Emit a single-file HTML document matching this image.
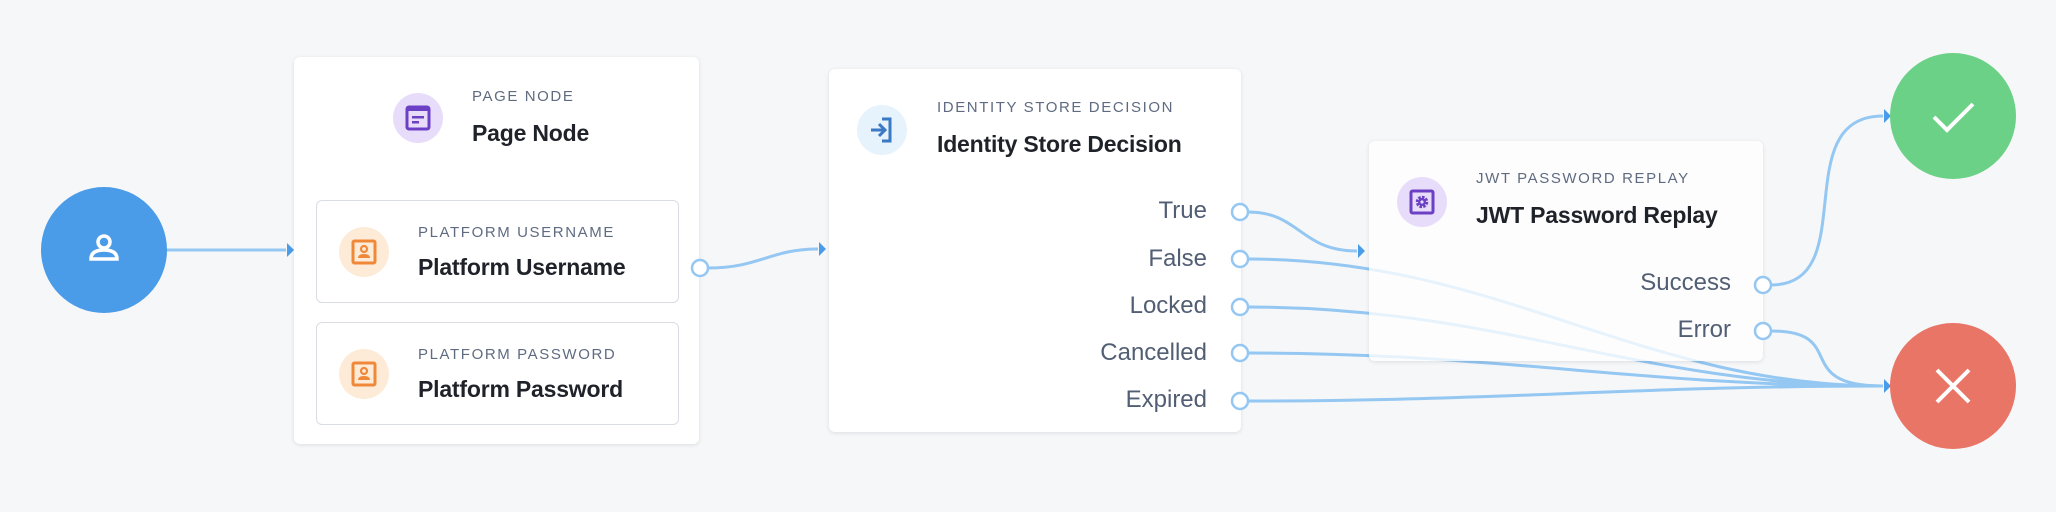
<!DOCTYPE html>
<html><head><meta charset="utf-8">
<style>
*{margin:0;padding:0;box-sizing:border-box}
body{width:2056px;height:512px;background:#f6f7f9;position:relative;overflow:hidden;font-family:"Liberation Sans",sans-serif}
.card{position:absolute;background:#fff;border-radius:6px;box-shadow:0 1px 4px rgba(30,40,60,.12)}
.sub{position:absolute;background:#fff;border:1.5px solid #d9dde3;border-radius:6px}
.ic{position:absolute;width:50px;height:50px;border-radius:50%;display:flex;align-items:center;justify-content:center}
.lbl{position:absolute;font-size:15px;letter-spacing:1.6px;color:#5f6b80;white-space:nowrap}
.ttl{position:absolute;font-size:23px;font-weight:bold;color:#1f2329;white-space:nowrap;letter-spacing:-0.2px}
.out{position:absolute;font-size:24px;color:#525e73;text-align:right;white-space:nowrap;width:200px}
svg.top{position:absolute;left:0;top:0;pointer-events:none}
</style></head><body>

<svg class="top" width="2056" height="512" style="z-index:1">
<g fill="none" stroke="#94c7f2" stroke-width="3">
<line x1="167" y1="250" x2="286" y2="250"/>
<path d="M708 268 C760 268 770 249 818 249"/>
<path d="M1248 212 C1300 212 1300 251 1357 251"/>
<path d="M1248 259 C1500 259 1640 386 1883 386"/>
<path d="M1248 307 C1500 307 1640 386 1883 386"/>
<path d="M1248 353 C1500 353 1640 386 1883 386"/>
<path d="M1248 401 C1500 401 1640 386 1883 386"/>
<path d="M1771 331 C1850 331 1790 386 1883 386"/>
<path d="M1771 285 C1863 285 1786 116 1883 116"/>
</g>
<g fill="#4a9be8">
<polygon points="287,243 294,250 287,257"/>
<polygon points="819,242 826,249 819,256"/>
<polygon points="1358,244 1365,251 1358,258"/>
<polygon points="1884,109 1891,116 1884,123"/>
<polygon points="1884,379 1891,386 1884,393"/>
</g>
</svg>

<!-- start -->
<div style="position:absolute;left:41px;top:187px;width:126px;height:126px;border-radius:50%;background:#4a9be8;z-index:2">
<svg width="126" height="126" style="position:absolute;left:0;top:0"><g fill="none" stroke="#fff" stroke-width="3.5"><circle cx="63" cy="55" r="6"/><path d="M50 72 Q50 63 63 63 Q76 63 76 72 Z"/></g></svg>
</div>

<!-- page node -->
<div class="card" style="left:294px;top:57px;width:405px;height:387px;z-index:2">
<div class="ic" style="left:99px;top:36px;background:#e8dcfb"><svg width="26" height="26"><rect x="2" y="2" width="22" height="22" rx="2" fill="none" stroke="#6b40c4" stroke-width="3"/><rect x="2" y="2" width="22" height="4" fill="#6b40c4"/><rect x="7" y="11" width="12" height="2.5" fill="#6b40c4"/><rect x="7" y="16" width="7" height="2.5" fill="#6b40c4"/></svg></div>
<div class="lbl" style="left:178px;top:31px">PAGE NODE</div>
<div class="ttl" style="left:178px;top:63px">Page Node</div>
<div class="sub" style="left:22px;top:143px;width:363px;height:103px">
<div class="ic" style="left:22px;top:26px;background:#fdebd7"><svg width="26" height="26"><rect x="2" y="2" width="22" height="22" rx="1.5" fill="none" stroke="#f0883a" stroke-width="3"/><circle cx="13" cy="10" r="3" fill="none" stroke="#f0883a" stroke-width="2.2"/><path d="M7 19 Q7 15 13 15 Q19 15 19 19 Z" fill="#f0883a"/></svg></div>
<div class="lbl" style="left:101px;top:23px">PLATFORM USERNAME</div>
<div class="ttl" style="left:101px;top:53px">Platform Username</div>
</div>
<div class="sub" style="left:22px;top:265px;width:363px;height:103px">
<div class="ic" style="left:22px;top:26px;background:#fdebd7"><svg width="26" height="26"><rect x="2" y="2" width="22" height="22" rx="1.5" fill="none" stroke="#f0883a" stroke-width="3"/><circle cx="13" cy="10" r="3" fill="none" stroke="#f0883a" stroke-width="2.2"/><path d="M7 19 Q7 15 13 15 Q19 15 19 19 Z" fill="#f0883a"/></svg></div>
<div class="lbl" style="left:101px;top:23px">PLATFORM PASSWORD</div>
<div class="ttl" style="left:101px;top:53px">Platform Password</div>
</div>
</div>

<!-- identity -->
<div class="card" style="left:829px;top:69px;width:412px;height:363px;z-index:2">
<div class="ic" style="left:28px;top:36px;background:#e6f2fc"><svg width="28" height="28"><path d="M14 3 H22 V25 H14" fill="none" stroke="#3a7ac4" stroke-width="3"/><path d="M3 14 H17 M11 8 L17 14 L11 20" fill="none" stroke="#3a7ac4" stroke-width="3"/></svg></div>
<div class="lbl" style="left:108px;top:30px">IDENTITY STORE DECISION</div>
<div class="ttl" style="left:108px;top:62px">Identity Store Decision</div>
<div class="out" style="left:178px;top:128px">True</div>
<div class="out" style="left:178px;top:176px">False</div>
<div class="out" style="left:178px;top:223px">Locked</div>
<div class="out" style="left:178px;top:270px">Cancelled</div>
<div class="out" style="left:178px;top:317px">Expired</div>
</div>

<!-- jwt -->
<div class="card" style="left:1369px;top:141px;width:394px;height:220px;z-index:2;background:rgba(255,255,255,0.78)">
<div class="ic" style="left:28px;top:36px;background:#e8dcfb"><svg width="26" height="26"><rect x="2" y="2" width="22" height="22" rx="1.5" fill="none" stroke="#6b40c4" stroke-width="3"/><circle cx="13" cy="13" r="4.5" fill="none" stroke="#6b40c4" stroke-width="3.5" stroke-dasharray="2.4 1.1"/><circle cx="13" cy="13" r="4" fill="#6b40c4"/><circle cx="13" cy="13" r="1.6" fill="#e8dcfb"/></svg></div>
<div class="lbl" style="left:107px;top:29px">JWT PASSWORD REPLAY</div>
<div class="ttl" style="left:107px;top:61px">JWT Password Replay</div>
<div class="out" style="left:162px;top:128px">Success</div>
<div class="out" style="left:162px;top:175px">Error</div>
</div>

<!-- ends -->
<div style="position:absolute;left:1890px;top:53px;width:126px;height:126px;border-radius:50%;background:#6bd186;z-index:2">
<svg width="126" height="126"><path d="M44 64 L57 77 L83 51" fill="none" stroke="#fff" stroke-width="4"/></svg></div>
<div style="position:absolute;left:1890px;top:323px;width:126px;height:126px;border-radius:50%;background:#e87565;z-index:2">
<svg width="126" height="126"><path d="M47 47 L79 79 M79 47 L47 79" fill="none" stroke="#fff" stroke-width="4"/></svg></div>

<!-- connectors -->
<svg class="top" width="2056" height="512" style="z-index:3">
<g fill="#fff" stroke="#94c7f2" stroke-width="2.5">
<circle cx="700" cy="268" r="8"/>
<circle cx="1240" cy="212" r="8"/>
<circle cx="1240" cy="259" r="8"/>
<circle cx="1240" cy="307" r="8"/>
<circle cx="1240" cy="353" r="8"/>
<circle cx="1240" cy="401" r="8"/>
<circle cx="1763" cy="285" r="8"/>
<circle cx="1763" cy="331" r="8"/>
</g>
</svg>
</body></html>
